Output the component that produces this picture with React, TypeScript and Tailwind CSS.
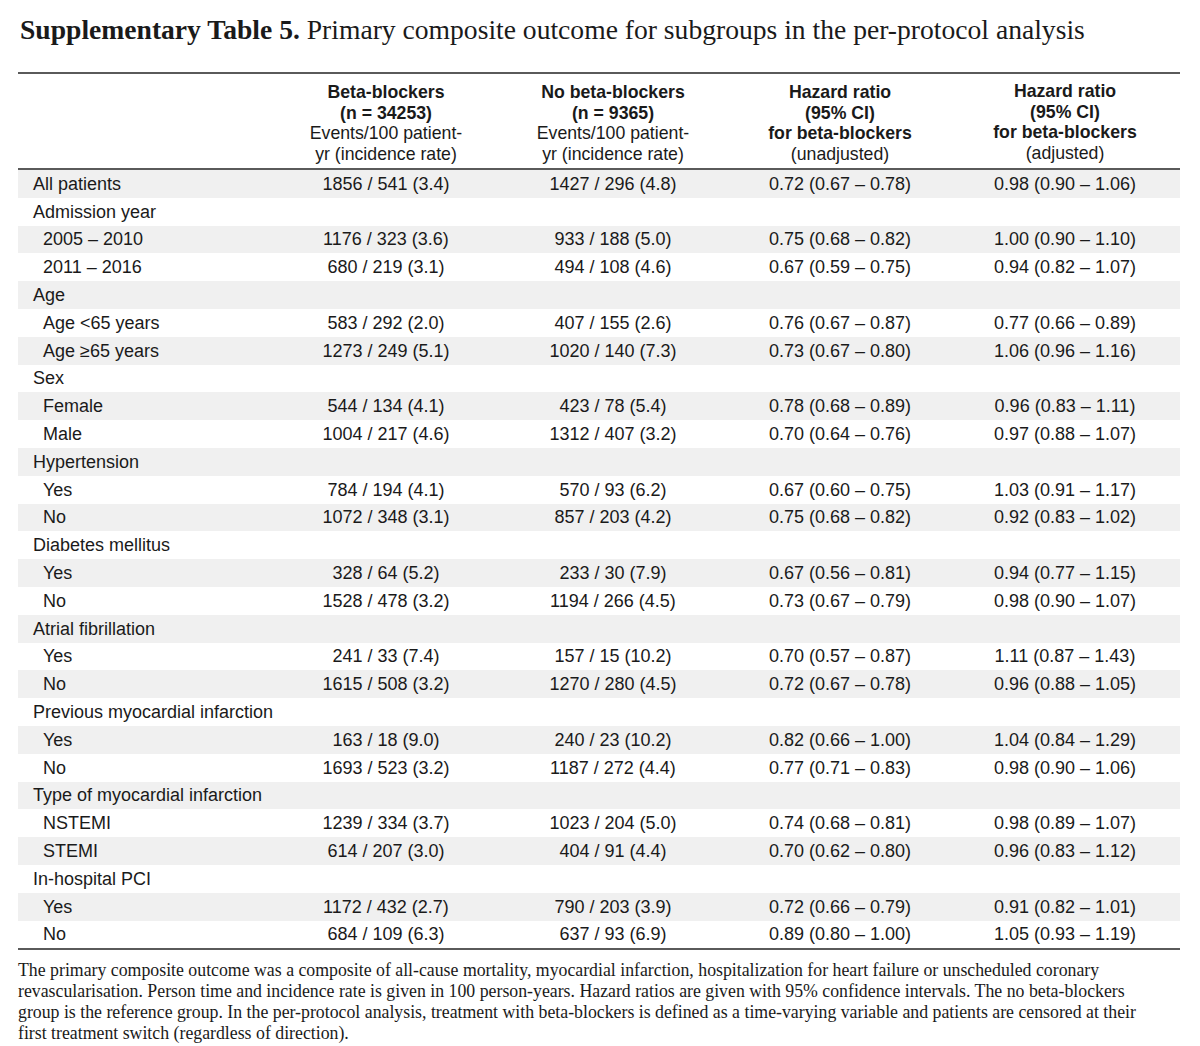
import React from "react";

type Row = {
	label: string;
	indent?: boolean;
	values?: [string, string, string, string];
};

const rows: Row[] = [
	{ label: "All patients", values: ["1856 / 541 (3.4)", "1427 / 296 (4.8)", "0.72 (0.67 – 0.78)", "0.98 (0.90 – 1.06)"] },
	{ label: "Admission year" },
	{ label: "2005 – 2010", indent: true, values: ["1176 / 323 (3.6)", "933 / 188 (5.0)", "0.75 (0.68 – 0.82)", "1.00 (0.90 – 1.10)"] },
	{ label: "2011 – 2016", indent: true, values: ["680 / 219 (3.1)", "494 / 108 (4.6)", "0.67 (0.59 – 0.75)", "0.94 (0.82 – 1.07)"] },
	{ label: "Age" },
	{ label: "Age <65 years", indent: true, values: ["583 / 292 (2.0)", "407 / 155 (2.6)", "0.76 (0.67 – 0.87)", "0.77 (0.66 – 0.89)"] },
	{ label: "Age ≥65 years", indent: true, values: ["1273 / 249 (5.1)", "1020 / 140 (7.3)", "0.73 (0.67 – 0.80)", "1.06 (0.96 – 1.16)"] },
	{ label: "Sex" },
	{ label: "Female", indent: true, values: ["544 / 134 (4.1)", "423 / 78 (5.4)", "0.78 (0.68 – 0.89)", "0.96 (0.83 – 1.11)"] },
	{ label: "Male", indent: true, values: ["1004 / 217 (4.6)", "1312 / 407 (3.2)", "0.70 (0.64 – 0.76)", "0.97 (0.88 – 1.07)"] },
	{ label: "Hypertension" },
	{ label: "Yes", indent: true, values: ["784 / 194 (4.1)", "570 / 93 (6.2)", "0.67 (0.60 – 0.75)", "1.03 (0.91 – 1.17)"] },
	{ label: "No", indent: true, values: ["1072 / 348 (3.1)", "857 / 203 (4.2)", "0.75 (0.68 – 0.82)", "0.92 (0.83 – 1.02)"] },
	{ label: "Diabetes mellitus" },
	{ label: "Yes", indent: true, values: ["328 / 64 (5.2)", "233 / 30 (7.9)", "0.67 (0.56 – 0.81)", "0.94 (0.77 – 1.15)"] },
	{ label: "No", indent: true, values: ["1528 / 478 (3.2)", "1194 / 266 (4.5)", "0.73 (0.67 – 0.79)", "0.98 (0.90 – 1.07)"] },
	{ label: "Atrial fibrillation" },
	{ label: "Yes", indent: true, values: ["241 / 33 (7.4)", "157 / 15 (10.2)", "0.70 (0.57 – 0.87)", "1.11 (0.87 – 1.43)"] },
	{ label: "No", indent: true, values: ["1615 / 508 (3.2)", "1270 / 280 (4.5)", "0.72 (0.67 – 0.78)", "0.96 (0.88 – 1.05)"] },
	{ label: "Previous myocardial infarction" },
	{ label: "Yes", indent: true, values: ["163 / 18 (9.0)", "240 / 23 (10.2)", "0.82 (0.66 – 1.00)", "1.04 (0.84 – 1.29)"] },
	{ label: "No", indent: true, values: ["1693 / 523 (3.2)", "1187 / 272 (4.4)", "0.77 (0.71 – 0.83)", "0.98 (0.90 – 1.06)"] },
	{ label: "Type of myocardial infarction" },
	{ label: "NSTEMI", indent: true, values: ["1239 / 334 (3.7)", "1023 / 204 (5.0)", "0.74 (0.68 – 0.81)", "0.98 (0.89 – 1.07)"] },
	{ label: "STEMI", indent: true, values: ["614 / 207 (3.0)", "404 / 91 (4.4)", "0.70 (0.62 – 0.80)", "0.96 (0.83 – 1.12)"] },
	{ label: "In-hospital PCI" },
	{ label: "Yes", indent: true, values: ["1172 / 432 (2.7)", "790 / 203 (3.9)", "0.72 (0.66 – 0.79)", "0.91 (0.82 – 1.01)"] },
	{ label: "No", indent: true, values: ["684 / 109 (6.3)", "637 / 93 (6.9)", "0.89 (0.80 – 1.00)", "1.05 (0.93 – 1.19)"] },
];

const grid = "grid grid-cols-[258px_220px_234px_220px_230px]";

const App: React.FC = () => {
	return (
		<div className="w-[1200px] h-[1046px] bg-white px-[18px] pt-[13px] text-[#1a1a1a]">
			<h1 className="font-['Liberation_Serif',serif] text-[27.6px] leading-[34px] ml-[2px]">
				<span className="font-bold">Supplementary Table 5.</span> Primary composite outcome for subgroups in the per-protocol analysis
			</h1>
			<div className="mt-[25px] w-[1162px] font-['Liberation_Sans',Arial,sans-serif] text-[18px]">
				<div className={`${grid} border-t-2 border-b-2 border-[#5a5a5a] pt-[8px] pb-[4px] leading-[20.5px] text-[17.7px] text-center`}>
					<div />
					<div>
						<div className="font-bold">Beta-blockers</div>
						<div className="font-bold">(n = 34253)</div>
						<div>Events/100 patient-</div>
						<div>yr (incidence rate)</div>
					</div>
					<div>
						<div className="font-bold">No beta-blockers</div>
						<div className="font-bold">(n = 9365)</div>
						<div>Events/100 patient-</div>
						<div>yr (incidence rate)</div>
					</div>
					<div>
						<div className="font-bold">Hazard ratio</div>
						<div className="font-bold">(95% CI)</div>
						<div className="font-bold">for beta-blockers</div>
						<div>(unadjusted)</div>
					</div>
					<div className="-mt-[1px]">
						<div className="font-bold">Hazard ratio</div>
						<div className="font-bold">(95% CI)</div>
						<div className="font-bold">for beta-blockers</div>
						<div>(adjusted)</div>
					</div>
				</div>
				<div className="border-b-2 border-[#5a5a5a]">
					{rows.map((row, i) => (
						<div
							key={i}
							className={`${grid} h-[27.8px] items-center text-center leading-[20px] ${i % 2 === 0 ? "bg-[#f0f0f0]" : "bg-white"}`}
						>
							<div className={`text-left ${row.indent ? "pl-[25px]" : "pl-[15px]"}`}>{row.label}</div>
							{row.values ? (
								row.values.map((v, j) => <div key={j}>{v}</div>)
							) : (
								<>
									<div />
									<div />
									<div />
									<div />
								</>
							)}
						</div>
					))}
				</div>
			</div>
			<p className="mt-[10px] w-[1120px] font-['Liberation_Serif',serif] text-[17.8px] leading-[21px]">
				The primary composite outcome was a composite of all-cause mortality, myocardial infarction, hospitalization for heart failure or unscheduled coronary revascularisation. Person time and incidence rate is given in 100 person-years. Hazard ratios are given with 95% confidence intervals. The no beta-blockers group is the reference group. In the per-protocol analysis, treatment with beta-blockers is defined as a time-varying variable and patients are censored at their first treatment switch (regardless of direction).
			</p>
		</div>
	);
};

export default App;
